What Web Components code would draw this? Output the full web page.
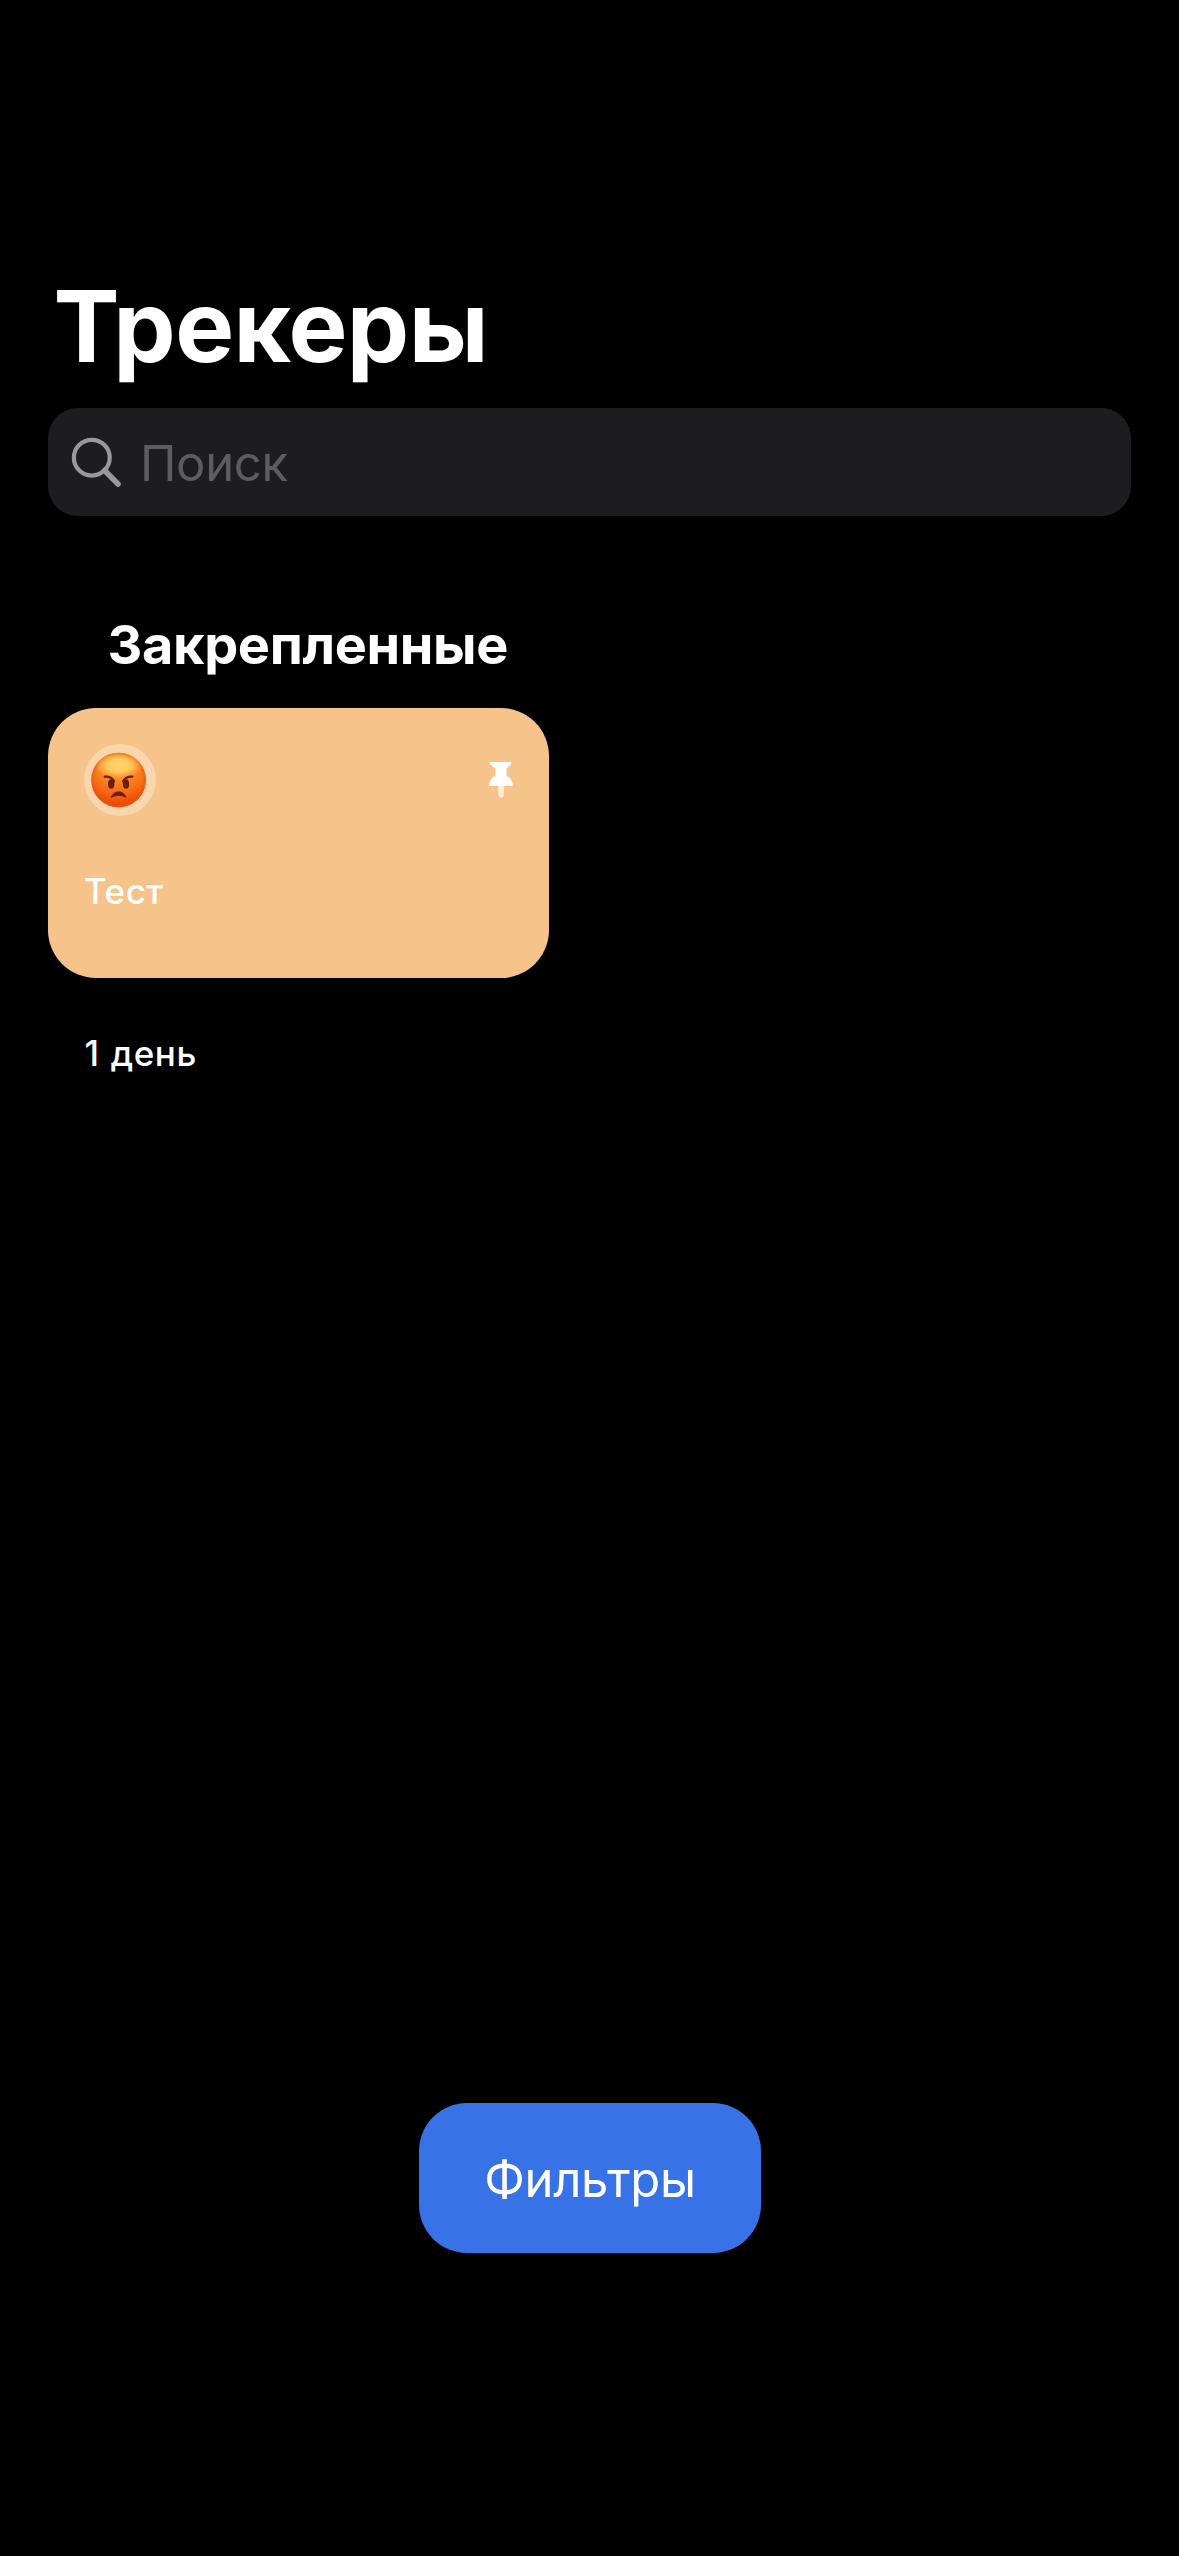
<!DOCTYPE html>
<html lang="ru">
<head>
<meta charset="utf-8">
<title>Трекеры</title>
<style>
html,body{margin:0;height:100%;background:#000}
body{font-family:Inter,"Liberation Sans",sans-serif;color:#fff}
</style>
</head>
<body>
<tracker-screen>
  <page-title slot="header">Трекеры</page-title>
  <search-field slot="header">Поиск</search-field>
  <tracker-section>
    <span slot="heading">Закрепленные</span>
    <tracker-card><span slot="name">Тест</span><span slot="days">1 день</span></tracker-card>
  </tracker-section>
  <filter-button slot="footer">Фильтры</filter-button>
</tracker-screen>
<script>
const define = (name, html) => {
  const template = document.createElement('template');
  template.innerHTML = html;
  customElements.define(name, class extends HTMLElement {
    constructor() {
      super();
      this.attachShadow({mode: 'open'}).append(template.content.cloneNode(true));
    }
  });
};

define('tracker-screen', `<style>
:host{display:flex;flex-direction:column;box-sizing:border-box;width:1179px;height:2556px;padding:266px 48px 303px;background:#000;overflow:hidden}
header{display:flex;flex-direction:column;gap:22px}
main{flex:1;padding-top:96px}
footer{display:flex;justify-content:center}
</style><header><slot name="header"></slot></header><main><slot></slot></main><footer><slot name="footer"></slot></footer>`);

define('page-title', `<style>
:host{display:block}
h1{margin:0;padding-left:5.5px;font-size:99px;line-height:120px;font-weight:700;letter-spacing:-.6px}
</style><h1><slot></slot></h1>`);

define('search-field', `<style>
:host{display:flex;align-items:center;box-sizing:border-box;height:108px;padding:0 22px;border-radius:30px;background:#1d1d1f;color:#5d5d61}
svg{display:block;width:52px;height:52px;margin-right:18px}
span{font-size:49px;line-height:60px;padding-top:3px;letter-spacing:-.3px}
</style><svg viewBox="0 0 52 52" fill="none" stroke="#98989f"><circle cx="21.8" cy="21.7" r="17.9" stroke-width="4.2"/><path d="M34.6 34.5 48 48" stroke-width="5.6" stroke-linecap="round"/></svg><span><slot></slot></span>`);

define('tracker-section', `<style>
:host{display:block}
h2{margin:0 0 30px;padding-left:59.5px;font-size:54px;line-height:66px;font-weight:700;letter-spacing:-.35px}
</style><h2><slot name="heading"></slot></h2><slot></slot>`);

define('tracker-card', `<style>
:host{display:block;width:501px;font-size:35px;line-height:54px;font-weight:500;letter-spacing:.5px}
.card{box-sizing:border-box;height:270px;padding:36px;border-radius:48px;background:#f6c48b}
.top{display:flex;justify-content:space-between;height:72px;margin-bottom:48px}
.emoji{display:block;width:72px;height:72px}
.pin{display:block;width:30px;height:42px;margin:14px -3px 0 0}
.days{padding:48px 36.5px 0;word-spacing:1.5px}
</style><div class="card"><div class="top">
<svg class="emoji" viewBox="0 0 72 72"><defs>
<radialGradient id="face" gradientUnits="userSpaceOnUse" cx="34.6" cy="18" r="46"><stop offset="0" stop-color="#fda93a"/><stop offset=".4" stop-color="#fa8a24"/><stop offset=".68" stop-color="#f56a14"/><stop offset="1" stop-color="#e83c04"/></radialGradient>
<radialGradient id="rim"><stop offset=".86" stop-color="#e8600f" stop-opacity="0"/><stop offset="1" stop-color="#e8550f" stop-opacity=".7"/></radialGradient>
<radialGradient id="shine"><stop offset="0" stop-color="#ffd66c"/><stop offset=".5" stop-color="#ffd267" stop-opacity=".85"/><stop offset="1" stop-color="#ffb850" stop-opacity="0"/></radialGradient></defs>
<circle cx="36" cy="36" r="36" fill="#fff" fill-opacity=".3"/>
<circle cx="34.6" cy="36" r="27.3" fill="url(#face)"/><circle cx="34.6" cy="36" r="27.3" fill="url(#rim)"/>
<ellipse cx="34.6" cy="21.5" rx="24" ry="13" fill="url(#shine)"/>
<g fill="#6b2004"><ellipse cx="27.2" cy="40" rx="3.2" ry="4.8"/><ellipse cx="42" cy="40" rx="3.2" ry="4.8"/></g>
<g fill="none" stroke="#6b2004" stroke-width="2.2" stroke-linecap="round"><path d="M20.8 32.6Q27.3 32.2 30.2 37.3"/><path d="M48.4 32.6Q41.9 32.2 39 37.3"/></g>
<path d="M27.2 53.4Q29.3 47.8 34.6 47.8 39.9 47.8 42 53.4 38 51.3 34.6 51.3 31.2 51.3 27.2 53.4Z" fill="#6b2004" stroke="#6b2004" stroke-width=".8" stroke-linejoin="round"/></svg>
<svg class="pin" viewBox="0 0 30 42"><path d="M3.5 4H25.5L24.8 6.5 20.5 10.4V17.5Q26.5 20.5 27 28H3Q3.5 20.5 9.5 17.5V10.4L4.2 6.5Z" fill="#fff"/><path d="M12.2 28H17.8V38L15 40 12.2 38Z" fill="#fff" fill-opacity=".68"/></svg>
</div><slot name="name"></slot></div><div class="days"><slot name="days"></slot></div>`);

define('filter-button', `<style>
:host{display:block}
button{display:block;box-sizing:border-box;width:342px;height:150px;padding:3px 0 0 1px;border:0;border-radius:48px;background:#3772e7;color:#fff;font:400 49px/60px Inter,"Liberation Sans",sans-serif;letter-spacing:-.35px;text-align:center}
</style><button><slot></slot></button>`);
</script>
</body>
</html>
